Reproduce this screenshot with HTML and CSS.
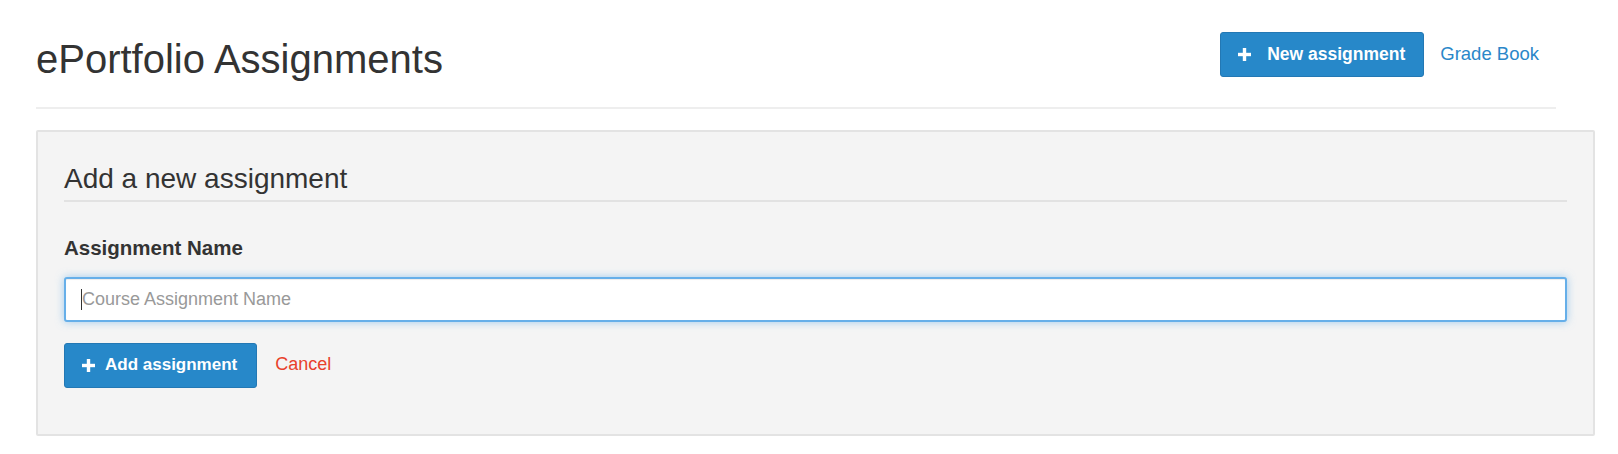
FILE: index.html
```html
<!DOCTYPE html>
<html lang="en">
<head>
<meta charset="utf-8">
<title>ePortfolio Assignments</title>
<link rel="stylesheet" href="styles.css">
</head>
<body>
<div class="page">
  <header class="page-header">
    <h1 class="title">ePortfolio Assignments</h1>
    <div class="actions">
      <button class="btn btn-new" type="button"><svg class="plus" viewBox="0 0 13 13" width="13" height="13"><rect x="4.8" y="0" width="3.4" height="13" fill="#fff"/><rect x="0" y="4.8" width="13" height="3.4" fill="#fff"/></svg><span>New assignment</span></button>
      <a class="link" href="#">Grade Book</a>
    </div>
  </header>
  <section class="well">
    <h3 class="well-title">Add a new assignment</h3>
    <label class="label" for="name">Assignment Name</label>
    <div class="input-wrap">
      <input class="input" id="name" type="text" placeholder="Course Assignment Name">
      <span class="caret"></span>
    </div>
    <div class="form-actions">
      <button class="btn btn-add" type="button"><svg class="plus" viewBox="0 0 13 13" width="13" height="13"><rect x="4.8" y="0" width="3.4" height="13" fill="#fff"/><rect x="0" y="4.8" width="13" height="3.4" fill="#fff"/></svg><span>Add assignment</span></button>
      <a class="cancel" href="#">Cancel</a>
    </div>
  </section>
</div>
</body>
</html>
```
FILE: styles.css
```css
* { box-sizing: border-box; }
html, body { margin: 0; padding: 0; background: #fff; }
body {
  font-family: "Liberation Sans", Arial, Helvetica, sans-serif;
  color: #333;
  font-size: 18px;
}
.page {
  width: 1559px;
  margin-left: 36px;
}
.page-header {
  display: flex;
  align-items: flex-start;
  justify-content: space-between;
  width: 1520px;
  padding-top: 32px;
  padding-bottom: 26px;
  border-bottom: 2px solid #eeeeee;
}
.title {
  margin: 5px 0 0 0;
  font-size: 40px;
  font-weight: normal;
  line-height: 44px;
  color: #333;
}
.actions {
  display: flex;
  align-items: baseline;
  margin-right: 17px;
}
.btn {
  display: inline-flex;
  align-items: baseline;
  height: 45px;
  background: #2788c9;
  border: 1px solid #2378b4;
  border-radius: 3px;
  color: #fff;
  font-family: inherit;
  font-weight: bold;
  line-height: 24px;
  cursor: pointer;
}
.btn .plus { align-self: center; flex: none; }
.btn-new {
  padding: 9px 18px 10px 17px;
  font-size: 17.5px;
  gap: 16px;
}
.link {
  margin-left: 16px;
  color: #2a87c9;
  text-decoration: none;
  font-size: 18.5px;
}
.well {
  margin-top: 21px;
  background: #f4f4f4;
  border: 2px solid #e3e3e3;
  border-radius: 2px;
  padding: 31px 26px 46px 26px;
}
.well-title {
  margin: 0;
  font-size: 28px;
  font-weight: normal;
  line-height: 31px;
  padding-bottom: 6px;
  border-bottom: 2px solid #e2e2e2;
  color: #333;
}
.label {
  display: block;
  margin-top: 34px;
  font-size: 20.5px;
  font-weight: bold;
  line-height: 24px;
  color: #333;
}
.input-wrap {
  position: relative;
  margin-top: 17px;
}
.input {
  display: block;
  width: 100%;
  height: 45px;
  padding: 0 16px;
  border: 2px solid #66afe9;
  border-radius: 3px;
  background: #fff;
  font-family: inherit;
  font-size: 18px;
  color: #555;
  outline: none;
  box-shadow: inset 0 1px 1px rgba(0,0,0,.075), 0 0 8px rgba(102,175,233,.6);
}
.input::placeholder { color: #999; }
.caret {
  position: absolute;
  left: 17px;
  top: 12px;
  width: 1px;
  height: 21px;
  background: #333;
}
.form-actions {
  display: flex;
  align-items: baseline;
  margin-top: 21px;
}
.btn-add {
  padding: 9px 19px 10px 17px;
  font-size: 17px;
  gap: 10px;
}
.cancel {
  margin-left: 18px;
  color: #e8412c;
  text-decoration: none;
  font-size: 18px;
}
```
